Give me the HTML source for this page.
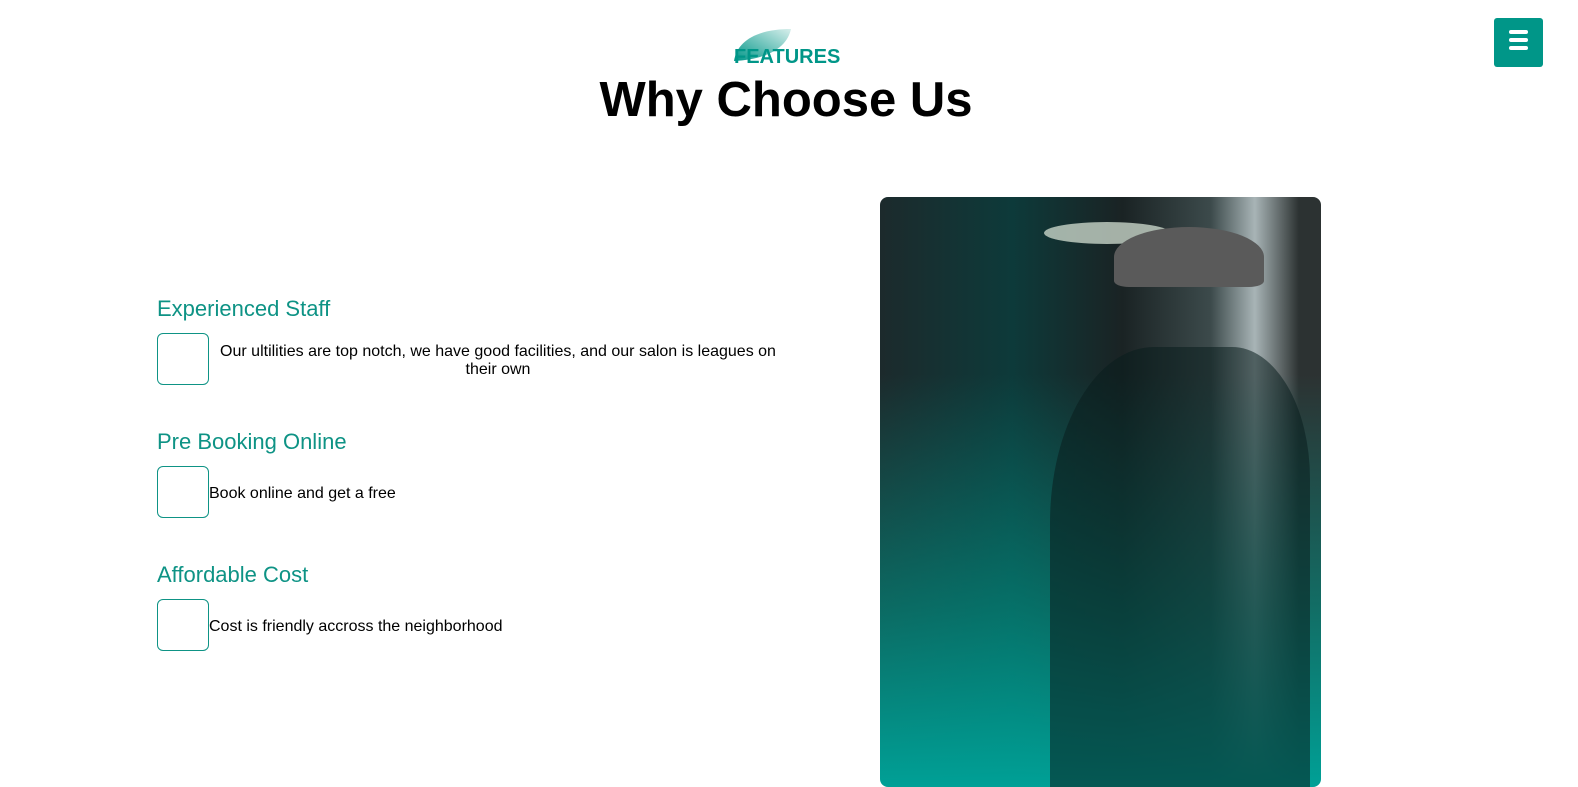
<!DOCTYPE html>
<html><head><meta charset="utf-8"><style>
body{margin:0;width:1578px;height:775px;overflow:hidden;background:#fff;font-family:"Liberation Sans",sans-serif;position:relative}
.menu{position:absolute;left:1494px;top:18px;width:49px;height:49px;background:#009688;border-radius:3px}
.menu i{position:absolute;left:15px;width:19px;height:4px;background:#fff;border-radius:2px}
.feat{position:absolute;left:734px;top:46px;color:#009688;font-weight:bold;font-size:20px}
h1{position:absolute;left:0;width:1572px;text-align:center;top:72px;margin:0;font-size:49px;font-weight:bold;color:#000}
h3{position:absolute;left:157px;margin:0;font-weight:normal;font-size:22px;color:#0e9385}
.box{position:absolute;left:157px;width:50px;height:50px;border:1px solid #0e9385;border-radius:6px}
.t{position:absolute;font-size:16px;color:#000}
.img{position:absolute;left:880px;top:197px;width:441px;height:590px;border-radius:8px;overflow:hidden;
background:linear-gradient(180deg,rgba(0,150,136,0) 30%,rgba(0,150,136,.6) 70%,#00a096 100%),linear-gradient(90deg,#1c2a2c 0%,#0d3a3a 30%,#1a2324 55%,#3c4a4b 75%,#a8b4b6 85%,#2c3232 95%)}
</style></head><body>
<div class="menu"><i style="top:12px"></i><i style="top:20px"></i><i style="top:28px"></i></div>
<svg style="position:absolute;left:733px;top:27px" width="62" height="36"><defs><linearGradient id="g" x1="0" y1="1" x2="1" y2="0"><stop offset="0" stop-color="#009688"/><stop offset="1" stop-color="#d8efec"/></linearGradient></defs><path d="M1 34 C4 14 24 2 58 2 C54 20 36 32 1 34Z" fill="url(#g)"/></svg>
<div class="feat">FEATURES</div>
<h1>Why Choose Us</h1>
<h3 style="top:296px">Experienced Staff</h3>
<div class="box" style="top:333px"></div>
<div class="t" style="left:218px;top:343px;width:560px;text-align:center">Our ultilities are top notch, we have good facilities, and our salon is leagues on their own</div>
<h3 style="top:429px">Pre Booking Online</h3>
<div class="box" style="top:466px"></div>
<div class="t" style="left:209px;top:485px">Book online and get a free</div>
<h3 style="top:562px">Affordable Cost</h3>
<div class="box" style="top:599px"></div>
<div class="t" style="left:209px;top:618px">Cost is friendly accross the neighborhood</div>
<div class="img">
<div style="position:absolute;left:164px;top:25px;width:126px;height:22px;border-radius:50%;background:#c8d4c8;opacity:.8"></div>
<div style="position:absolute;left:234px;top:30px;width:150px;height:60px;border-radius:50% 50% 10% 10%;background:#5a5a5a"></div>
<div style="position:absolute;left:170px;top:150px;width:260px;height:440px;background:rgba(10,30,30,.55);border-radius:40% 30% 0 0"></div>
</div>
</body></html>
